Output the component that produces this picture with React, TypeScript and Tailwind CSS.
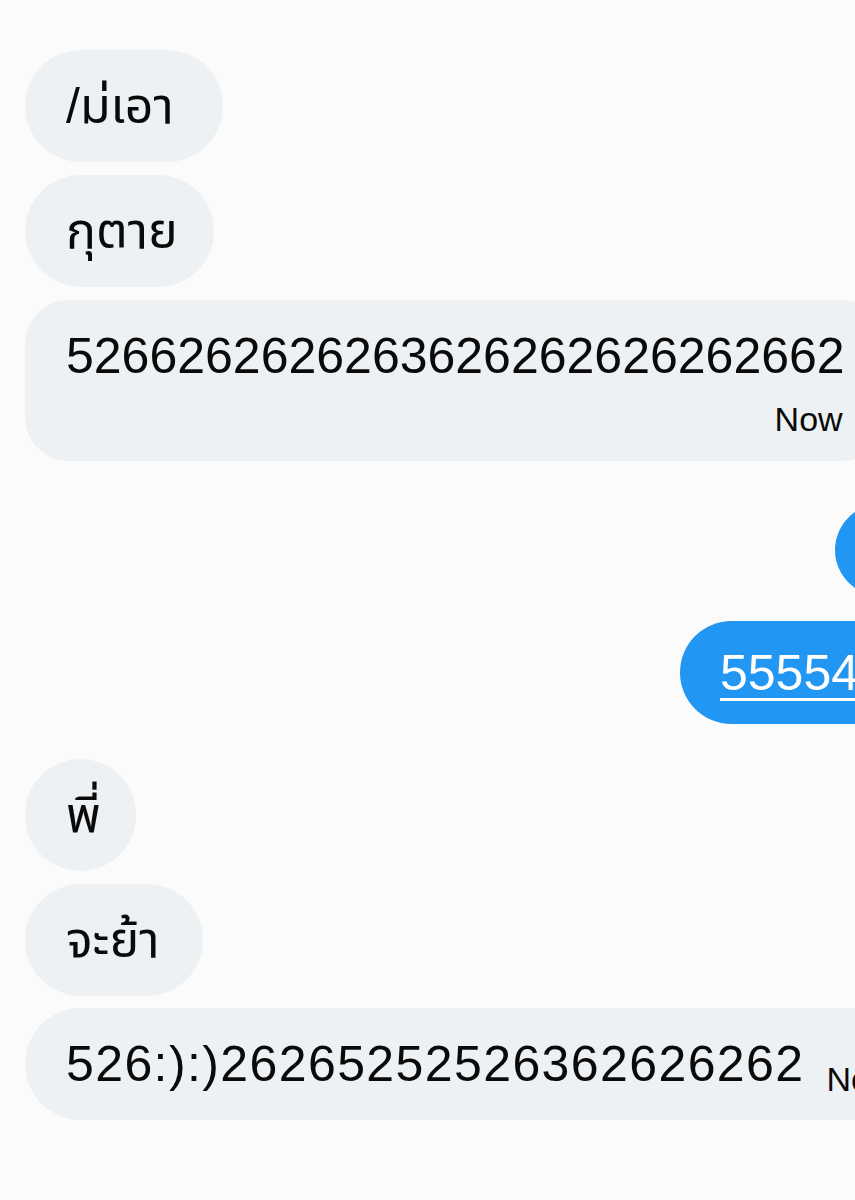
import React from "react";

const font = { fontFamily: '"Liberation Sans", Arial, "Noto Sans Thai", "Noto Sans", sans-serif' };

function Gray({ text, w, mt }: { text: string; w: string; mt: string }) {
  return (
    <div className={`flex ${mt}`}>
      <div className={`flex h-[112px] ${w} shrink-0 items-center rounded-full bg-[#eef1f3] pl-[41px] text-[50px] leading-none text-[#0a0a0a] whitespace-nowrap`}>
        {text}
      </div>
    </div>
  );
}

export default function App() {
  return (
    <div className="h-[1200px] w-[855px] overflow-hidden bg-[#fbfbfb]" style={font}>
      <div className="flex flex-col pl-[25px] pt-[50px]">
        <Gray text="/ม่เอา" w="w-[198px]" mt="mt-0" />
        <Gray text="กุตาย" w="w-[189px]" mt="mt-[13px]" />

        <div className="mt-[13px] flex">
          <div className="flex shrink-0 flex-col items-end rounded-[44px] bg-[#eef1f3] px-[41px] pb-[22px] pt-[26px] text-[#0a0a0a]">
            <div className="text-[50px] leading-[60px] whitespace-nowrap">5266262626263626262626262662</div>
            <div className="mr-[2px] mt-[13px] text-[34px] leading-[40px]">Now</div>
          </div>
        </div>

        <div className="mt-[43px] flex pl-[810px]">
          <div className="flex h-[92px] w-[200px] shrink-0 items-center rounded-full bg-[#2196f3] px-[40px] text-[50px] text-white" />
        </div>

        <div className="mt-[25px] flex pl-[655px]">
          <div className="flex h-[103px] shrink-0 items-center rounded-full bg-[#2196f3] pl-[40px] pr-[40px]">
            <span className="text-[50px] leading-none text-white underline decoration-[3px] underline-offset-[8px] whitespace-nowrap">
              55554555544
            </span>
          </div>
        </div>

        <Gray text="พี่" w="w-[111px]" mt="mt-[35px]" />
        <Gray text="จะย้า" w="w-[178px]" mt="mt-[13px]" />

        <div className="mt-[12px] flex">
          <div className="flex h-[112px] shrink-0 items-center rounded-full bg-[#eef1f3] pl-[41px] pr-[41px] text-[#0a0a0a] whitespace-nowrap">
            <span className="text-[50px] leading-none tracking-[1.4px]">526:):)26265252526362626262</span>
            <span className="ml-[22px] mt-[30px] text-[34px] leading-none">Now</span>
          </div>
        </div>
      </div>
    </div>
  );
}
